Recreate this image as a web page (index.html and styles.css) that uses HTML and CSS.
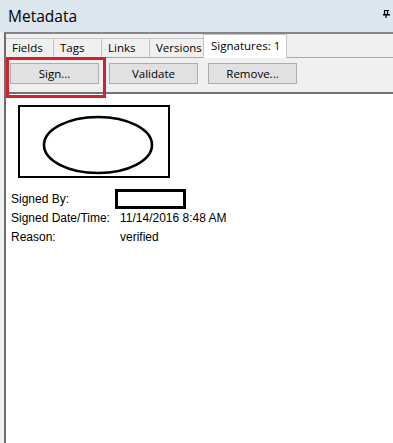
FILE: index.html
```html
<!DOCTYPE html>
<html lang="en">
<head>
    <meta charset="UTF-8">
    <title>Metadata</title>
    <link rel="stylesheet" href="styles.css">
</head>
<body>
    <div class="window">
        <div class="titlebar">
            <span class="title">Metadata</span>
            <!-- pushpin -->
            <svg class="pin" width="7" height="8" viewBox="0 0 7 8">
                <path d="M1 0.5 H6 M1.5 0.5 V4 M4.5 0.5 V4 M0 4.5 H7 M3 5 V8" stroke="#000" stroke-width="1.2" fill="none"/>
                <rect x="0" y="4" width="7" height="1.5" fill="#000"/>
            </svg>
        </div>
        <div class="panel">
            <div class="tabs">
                <div class="tab tab-fields">Fields</div>
                <div class="tab tab-tags">Tags</div>
                <div class="tab tab-links">Links</div>
                <div class="tab tab-versions">Versions</div>
                <div class="tab tab-active">Signatures: 1</div>
            </div>
            <div class="toolbar">
                <div class="highlight-wrap">
                    <button class="btn">Sign...</button>
                    <span class="highlight"></span>
                </div>
                <button class="btn">Validate</button>
                <button class="btn">Remove...</button>
            </div>
            <div class="content">
                <div class="sig-image">
                    <svg width="152" height="73" viewBox="0 0 152 73">
                        <rect x="1" y="1" width="150" height="71" fill="#fff" stroke="#000" stroke-width="2"/>
                        <ellipse cx="80" cy="40" rx="54" ry="28" fill="none" stroke="#000" stroke-width="2.6"/>
                    </svg>
                </div>
                <div class="details">
                    <div class="row">
                        <span class="label">Signed By:</span>
                        <span class="redacted"></span>
                    </div>
                    <div class="row">
                        <span class="label">Signed Date/Time:</span>
                        <span class="value">11/14/2016 8:48 AM</span>
                    </div>
                    <div class="row">
                        <span class="label">Reason:</span>
                        <span class="value">verified</span>
                    </div>
                </div>
            </div>
        </div>
    </div>
</body>
</html>
```

FILE: styles.css
```css
/* Metadata dock panel, Windows look */
body {
    margin: 0;
    background-color: #f0f0f0;
    font-family: 'Open Sans', sans-serif;
    color: #000;
}

.window {
    width: 393px;
    height: 443px;
    display: flex;
    flex-direction: column;
    overflow: hidden;
}

.titlebar {
    height: 32px;
    flex: none;
    background-color: #dce6ee;
    display: flex;
    align-items: center;
    padding: 0 3px 0 8px;
}

.title {
    flex: 1;
    font-size: 15.5px;
    margin-top: -1px;
}

.pin {
    margin-top: -4px;
}

.panel {
    flex: 1;
    display: flex;
    flex-direction: column;
    margin-left: 4px;
    border-left: 2px solid #6e6e6e;
    border-top: 2px solid #858585;
    background-color: #f0f0f0;
}

/* tab strip */
.tabs {
    display: flex;
    align-items: flex-end;
    height: 23px;
    border-bottom: 1px solid #a8a8a8;
    font-size: 11.5px;
}

.tab {
    height: 19px;
    line-height: 18px;
    padding-left: 6px;
    box-sizing: border-box;
    border: 1px solid #c4c4c4;
    border-bottom: none;
    margin-right: -1px;
}

.tab-fields { width: 48px; border-left: none; }
.tab-tags { width: 49px; }
.tab-links { width: 49px; }
.tab-versions { width: 55px; }

.tab-active {
    width: 84px;
    height: 24px;
    line-height: 22px;
    background-color: #fff;
    border-color: #c4c4c4;
    margin-bottom: -1px;
    padding-left: 7px;
}

/* buttons */
.toolbar {
    display: flex;
    gap: 10px;
    padding: 5px 0 0 4px;
    height: 29px;
    border-bottom: 2px solid #737373;
}

.highlight-wrap {
    position: relative;
    display: flex;
}

.btn {
    width: 89px;
    height: 21px;
    margin: 0;
    padding: 0;
    background-color: #e1e1e1;
    border: 1px solid #adadad;
    font-family: 'Open Sans', sans-serif;
    font-size: 11.5px;
    color: #000;
}

/* red annotation box around Sign... */
.highlight {
    position: absolute;
    left: -4px;
    top: -6px;
    right: -7px;
    bottom: -6px;
    border: 3px solid #d6202b;
}

/* signature area */
.content {
    flex: 1;
    background-color: #fff;
    padding: 11px 0 0 12px;
    font-family: 'Liberation Sans', Arial, sans-serif;
    font-size: 12px;
}

.sig-image svg {
    display: block;
}

.details {
    margin-top: 10px;
    margin-left: -7px;
}

.row {
    display: flex;
    align-items: center;
    height: 19px;
}

.row:first-child {
    height: 21px;
    margin-bottom: -1px;
}

.label {
    width: 104px;
}

.value {
    padding-left: 5px;
}

.redacted {
    width: 65px;
    height: 14px;
    border: 3px solid #000;
    background-color: #fff;
}
```
